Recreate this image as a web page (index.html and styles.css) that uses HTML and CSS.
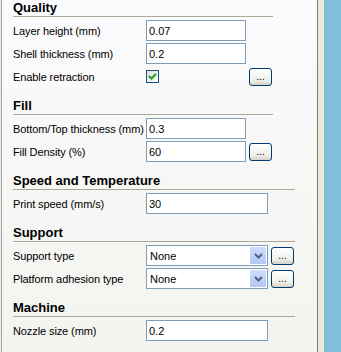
FILE: index.html
```html
<!DOCTYPE html>
<html>
  <head>
    <title>Print settings</title>
    <link rel="stylesheet" href="styles.css">
  </head>
  <body>
    <div class="frame">
      <div class="panel">

        <div class="section">
          <div class="title short">Quality</div>
          <div class="row"><span class="label">Layer height (mm)</span><input class="field" type="text" value="0.07"></div>
          <div class="row"><span class="label">Shell thickness (mm)</span><input class="field" type="text" value="0.2"></div>
          <div class="row">
            <span class="label">Enable retraction</span>
            <span class="slot"><span class="check"><svg width="11" height="11" viewBox="0 0 11 11"><polyline points="2,5 4.5,7.5 9,3" fill="none" stroke="#21a121" stroke-width="2.2"/></svg></span></span>
            <button class="more">...</button>
          </div>
        </div>

        <div class="section">
          <div class="title short">Fill</div>
          <div class="row"><span class="label">Bottom/Top thickness (mm)</span><input class="field" type="text" value="0.3"></div>
          <div class="row"><span class="label">Fill Density (%)</span><input class="field" type="text" value="60"><button class="more">...</button></div>
        </div>

        <div class="section">
          <div class="title">Speed and Temperature</div>
          <div class="row"><span class="label">Print speed (mm/s)</span><input class="field wide" type="text" value="30"></div>
        </div>

        <div class="section">
          <div class="title">Support</div>
          <div class="row">
            <span class="label">Support type</span>
            <div class="combo"><span class="combo-text">None</span><span class="arrow"><svg width="9" height="6" viewBox="0 0 9 6"><polyline points="1,1 4.5,4.5 8,1" fill="none" stroke="#4d6185" stroke-width="2"/></svg></span></div>
            <button class="more">...</button>
          </div>
          <div class="row">
            <span class="label">Platform adhesion type</span>
            <div class="combo"><span class="combo-text">None</span><span class="arrow"><svg width="9" height="6" viewBox="0 0 9 6"><polyline points="1,1 4.5,4.5 8,1" fill="none" stroke="#4d6185" stroke-width="2"/></svg></span></div>
            <button class="more">...</button>
          </div>
        </div>

        <div class="section">
          <div class="title">Machine</div>
          <div class="row"><span class="label">Nozzle size (mm)</span><input class="field wide" type="text" value="0.2"></div>
        </div>

      </div>
      <div class="edge"></div>
      <div class="strip"></div>
      <div class="desk"></div>
    </div>
  </body>
</html>
```

FILE: styles.css
```css
body {margin: 0; background-color: #ececec; font-family: "Liberation Sans", Arial, sans-serif; font-size: 11px; color: #000;}
.frame {display: flex; height: 352px; overflow: hidden;}
.panel {width: 304px; margin-left: 1px; border-left: 1px solid #a3a3a3; padding-left: 11px; background: linear-gradient(#fbfbfd, #f3f3ef);}
.edge {width: 1px; background-color: #7a7a7a;}
.strip {width: 6px; background-color: #ece9d8;}
.desk {flex: 1; background-color: #7fbfd8;}

.section {display: flex; flex-direction: column; gap: 2px; margin-top: 11px;}
.section:first-child {margin-top: 0;}
.title {width: 282px; height: 16px; line-height: 16px; font-size: 13px; font-weight: bold; border-bottom: 1px solid #aca899; margin-bottom: 1px;}
.title.short {width: 260px;}

.row {display: flex; align-items: center; height: 21px;}
.label {width: 133px; flex: none; white-space: nowrap; letter-spacing: -0.1px;}
.slot {width: 100px; display: flex; align-items: center;}

.field {box-sizing: border-box; width: 100px; height: 21px; margin: 0; padding: 0 2px; border: 1px solid #7f9db9; background: #fff; font-family: inherit; font-size: 11px; color: #000; outline: none;}
.field.wide {width: 122px;}

.check {box-sizing: border-box; width: 13px; height: 13px; border: 1px solid #1c5180; background: linear-gradient(135deg, #dcdcd7, #fff); display: flex; align-items: center; justify-content: center;}

.more {box-sizing: border-box; width: 23px; height: 18px; margin-left: 3px; padding: 0; border: 1px solid #003c74; border-radius: 3px; background: linear-gradient(#fff, #f0f0ea 70%, #d6d0c5); font-family: inherit; font-size: 10px; line-height: 12px; color: #000;}

.combo {box-sizing: border-box; width: 122px; height: 21px; border: 1px solid #7f9db9; background: #fff; display: flex; align-items: center; padding: 1px;}
.combo-text {flex: 1; padding-left: 2px;}
.arrow {width: 16px; height: 17px; background: linear-gradient(#cfdcfb, #b4c6f4); border-radius: 1px; display: flex; align-items: center; justify-content: center;}
```
